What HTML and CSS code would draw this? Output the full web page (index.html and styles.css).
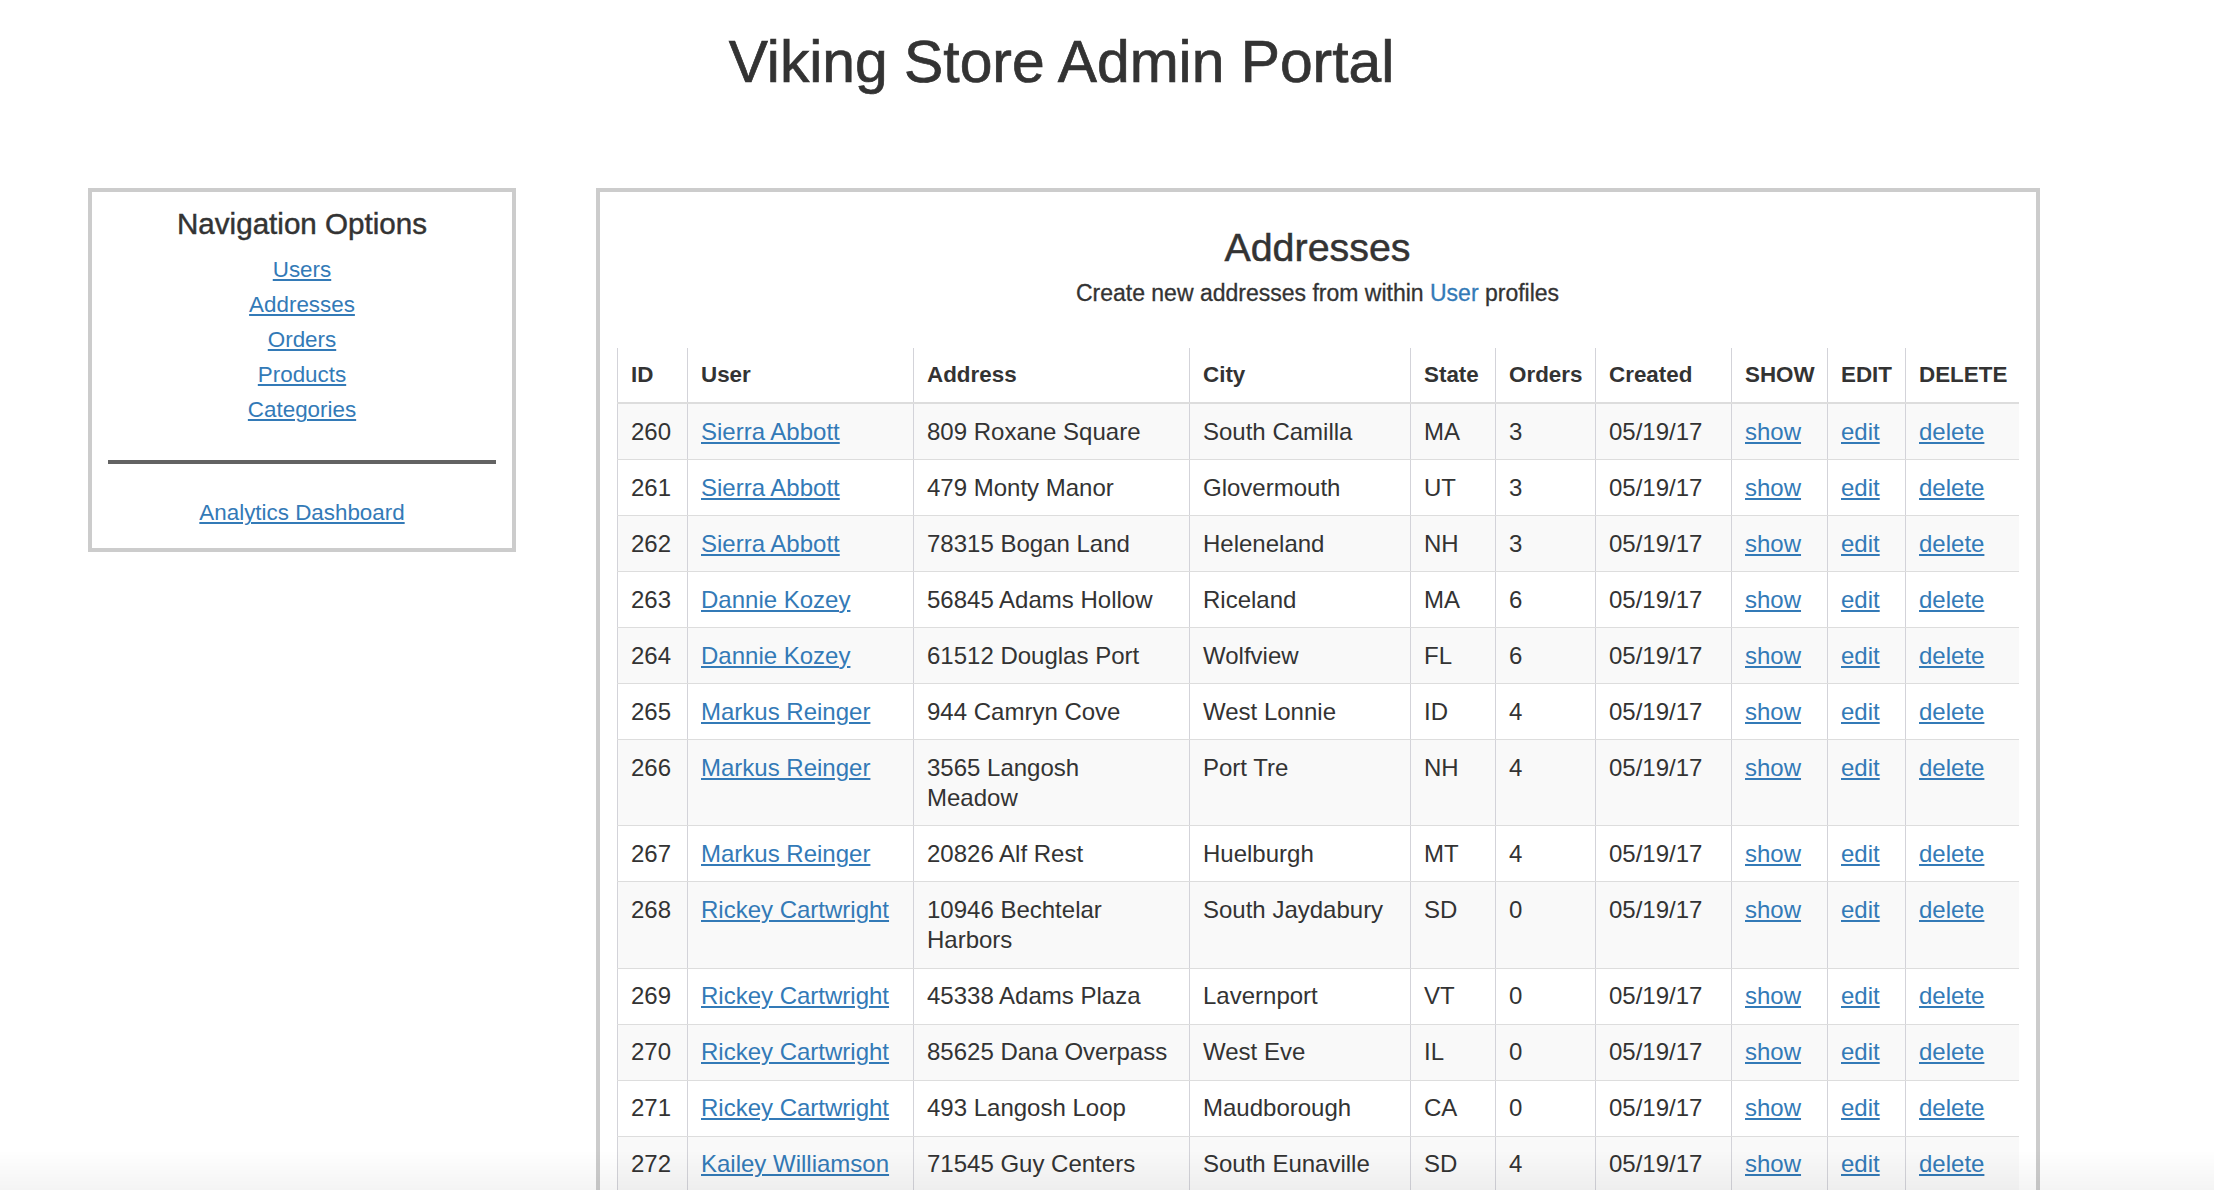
FILE: index.html
```html
<!DOCTYPE html>
<html lang="en">
<head>
<meta charset="utf-8">
<title>Viking Store Admin Portal</title>
<link rel="stylesheet" href="styles.css">
</head>
<body>
<header class="site-header">
  <h1 class="site-title">Viking Store Admin Portal</h1>
</header>
<div class="layout">
  <nav class="nav-box">
    <h2 class="nav-title">Navigation Options</h2>
    <ul class="nav-links">
      <li><a href="#">Users</a></li>
      <li><a href="#">Addresses</a></li>
      <li><a href="#">Orders</a></li>
      <li><a href="#">Products</a></li>
      <li><a href="#">Categories</a></li>
    </ul>
    <hr class="nav-divider">
    <div class="nav-extra"><a href="#">Analytics Dashboard</a></div>
  </nav>
  <main class="content-box">
    <h2 class="page-title">Addresses</h2>
    <p class="subtitle">Create new addresses from within <a class="plain-link" href="#">User</a> profiles</p>
    <table class="data-table">
      <colgroup>
        <col class="c-id"><col class="c-user"><col class="c-addr"><col class="c-city"><col class="c-state">
        <col class="c-orders"><col class="c-created"><col class="c-show"><col class="c-edit"><col class="c-delete">
      </colgroup>
      <thead>
        <tr><th>ID</th><th>User</th><th>Address</th><th>City</th><th>State</th><th>Orders</th><th>Created</th><th>SHOW</th><th>EDIT</th><th>DELETE</th></tr>
      </thead>
      <tbody>
        <tr><td>260</td><td><a href="#">Sierra Abbott</a></td><td class="addr">809 Roxane Square</td><td>South Camilla</td><td>MA</td><td>3</td><td>05/19/17</td><td><a href="#">show</a></td><td><a href="#">edit</a></td><td><a href="#">delete</a></td></tr>
        <tr><td>261</td><td><a href="#">Sierra Abbott</a></td><td class="addr">479 Monty Manor</td><td>Glovermouth</td><td>UT</td><td>3</td><td>05/19/17</td><td><a href="#">show</a></td><td><a href="#">edit</a></td><td><a href="#">delete</a></td></tr>
        <tr><td>262</td><td><a href="#">Sierra Abbott</a></td><td class="addr">78315 Bogan Land</td><td>Heleneland</td><td>NH</td><td>3</td><td>05/19/17</td><td><a href="#">show</a></td><td><a href="#">edit</a></td><td><a href="#">delete</a></td></tr>
        <tr><td>263</td><td><a href="#">Dannie Kozey</a></td><td class="addr">56845 Adams Hollow</td><td>Riceland</td><td>MA</td><td>6</td><td>05/19/17</td><td><a href="#">show</a></td><td><a href="#">edit</a></td><td><a href="#">delete</a></td></tr>
        <tr><td>264</td><td><a href="#">Dannie Kozey</a></td><td class="addr">61512 Douglas Port</td><td>Wolfview</td><td>FL</td><td>6</td><td>05/19/17</td><td><a href="#">show</a></td><td><a href="#">edit</a></td><td><a href="#">delete</a></td></tr>
        <tr><td>265</td><td><a href="#">Markus Reinger</a></td><td class="addr">944 Camryn Cove</td><td>West Lonnie</td><td>ID</td><td>4</td><td>05/19/17</td><td><a href="#">show</a></td><td><a href="#">edit</a></td><td><a href="#">delete</a></td></tr>
        <tr><td>266</td><td><a href="#">Markus Reinger</a></td><td class="addr">3565 Langosh Meadow</td><td>Port Tre</td><td>NH</td><td>4</td><td>05/19/17</td><td><a href="#">show</a></td><td><a href="#">edit</a></td><td><a href="#">delete</a></td></tr>
        <tr><td>267</td><td><a href="#">Markus Reinger</a></td><td class="addr">20826 Alf Rest</td><td>Huelburgh</td><td>MT</td><td>4</td><td>05/19/17</td><td><a href="#">show</a></td><td><a href="#">edit</a></td><td><a href="#">delete</a></td></tr>
        <tr><td>268</td><td><a href="#">Rickey Cartwright</a></td><td class="addr">10946 Bechtelar Harbors</td><td>South Jaydabury</td><td>SD</td><td>0</td><td>05/19/17</td><td><a href="#">show</a></td><td><a href="#">edit</a></td><td><a href="#">delete</a></td></tr>
        <tr><td>269</td><td><a href="#">Rickey Cartwright</a></td><td class="addr">45338 Adams Plaza</td><td>Lavernport</td><td>VT</td><td>0</td><td>05/19/17</td><td><a href="#">show</a></td><td><a href="#">edit</a></td><td><a href="#">delete</a></td></tr>
        <tr><td>270</td><td><a href="#">Rickey Cartwright</a></td><td class="addr">85625 Dana Overpass</td><td>West Eve</td><td>IL</td><td>0</td><td>05/19/17</td><td><a href="#">show</a></td><td><a href="#">edit</a></td><td><a href="#">delete</a></td></tr>
        <tr><td>271</td><td><a href="#">Rickey Cartwright</a></td><td class="addr">493 Langosh Loop</td><td>Maudborough</td><td>CA</td><td>0</td><td>05/19/17</td><td><a href="#">show</a></td><td><a href="#">edit</a></td><td><a href="#">delete</a></td></tr>
        <tr><td>272</td><td><a href="#">Kailey Williamson</a></td><td class="addr">71545 Guy Centers</td><td>South Eunaville</td><td>SD</td><td>4</td><td>05/19/17</td><td><a href="#">show</a></td><td><a href="#">edit</a></td><td><a href="#">delete</a></td></tr>
      </tbody>
    </table>
  </main>
</div>
<div class="bottom-fade"></div>
</body>
</html>
```

FILE: styles.css
```css
html, body {
  margin: 0;
  padding: 0;
  background: #fff;
}

body {
  font-family: "Liberation Sans", Arial, Helvetica, sans-serif;
  color: #333;
}

a {
  color: #337ab7;
  text-decoration: underline;
  text-decoration-thickness: 2px;
  text-underline-offset: 2px;
}

.site-header {
  padding-right: 91px;
  text-align: center;
}

.site-title {
  margin: 30px 0 0;
  font-size: 58.8px;
  line-height: 63.36px;
  font-weight: normal;
  color: #333;
  -webkit-text-stroke: 0.7px #333;
}

.layout {
  display: flex;
  align-items: flex-start;
  gap: 80px;
  margin-top: 94.6px;
  padding-left: 88px;
}

.nav-box {
  box-sizing: border-box;
  flex: 0 0 428px;
  width: 428px;
  border: 4px solid #ccc;
  padding: 16.2px 16px 17.7px;
  text-align: center;
  background: #fff;
}

.nav-title {
  margin: 0;
  font-size: 29.6px;
  line-height: 31.68px;
  font-weight: normal;
  color: #333;
  -webkit-text-stroke: 0.45px #333;
}

.nav-links {
  list-style: none;
  margin: 12.5px 0 0;
  padding: 0;
  font-size: 22.4px;
  line-height: 35px;
}

.nav-divider {
  margin: 32.5px 0 0;
  height: 4px;
  border: none;
  background: #636363;
}

.nav-extra {
  margin-top: 31.3px;
  font-size: 22.4px;
  line-height: 35px;
}

.content-box {
  box-sizing: border-box;
  flex: 0 0 1444px;
  width: 1444px;
  border: 4px solid #ccc;
  padding: 33.6px 18px 40px 17px;
  background: #fff;
}

.page-title {
  margin: 0;
  text-align: center;
  font-size: 39.4px;
  line-height: 42.24px;
  font-weight: normal;
  color: #333;
  -webkit-text-stroke: 0.5px #333;
}

.subtitle {
  margin: 13.1px 0 0;
  text-align: center;
  font-size: 23px;
  line-height: 25.5px;
  color: #333;
  -webkit-text-stroke: 0.3px #333;
}

.plain-link {
  text-decoration: none;
  -webkit-text-stroke: 0.3px #337ab7;
}

.data-table {
  margin-top: 41.6px;
  width: 1401px;
  table-layout: fixed;
  border-collapse: collapse;
  border-spacing: 0;
}

.c-id { width: 70px; }
.c-user { width: 226px; }
.c-addr { width: 276px; }
.c-city { width: 221px; }
.c-state { width: 85px; }
.c-orders { width: 100px; }
.c-created { width: 136px; }
.c-show { width: 96px; }
.c-edit { width: 78px; }
.c-delete { width: 113px; }

.data-table th {
  text-align: left;
  vertical-align: bottom;
  font-size: 22.4px;
  font-weight: bold;
  line-height: 30.3px;
  padding: 12px 13px;
  border-left: 1px solid #d3d3d9;
  border-bottom: 2px solid #ddd;
  color: #333;
}

.data-table td {
  vertical-align: top;
  font-size: 24px;
  line-height: 30.3px;
  padding: 12.35px 13px;
  border-left: 1px solid #d3d3d9;
  border-bottom: 1px solid #ddd;
  color: #333;
}

.data-table td.addr {
  padding-right: 18px;
}

.data-table tbody tr:nth-child(odd) td {
  background: #f9f9f9;
}

.bottom-fade {
  position: fixed;
  left: 0;
  right: 0;
  bottom: 0;
  height: 40px;
  background: linear-gradient(to bottom, rgba(0, 0, 0, 0), rgba(0, 0, 0, 0.045));
  pointer-events: none;
}
```
